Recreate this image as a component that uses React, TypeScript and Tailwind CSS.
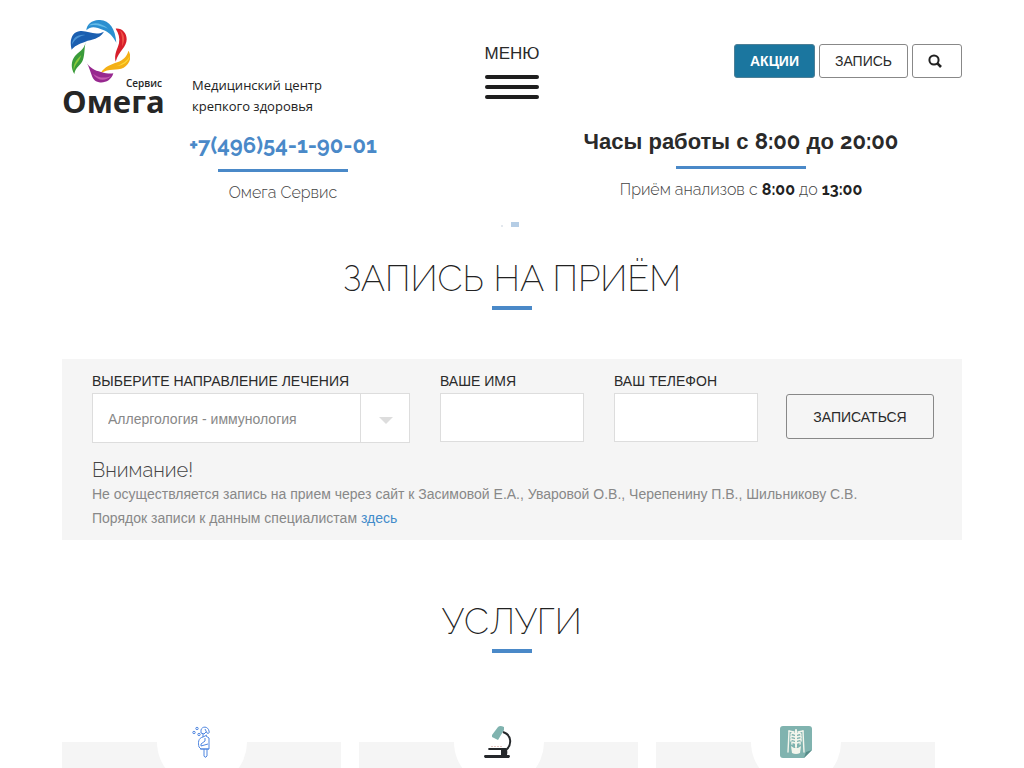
import type { ReactNode } from "react";

const sans = "font-['Liberation_Sans',Arial,sans-serif]";
const display = "font-[Raleway,Lato,sans-serif]";

function Logo() {
  return (
    <a href="#" aria-label="Омега Сервис" className="flex w-[100px] flex-col text-[#262626]">
      <svg viewBox="24 12 180 189" className="ml-2 h-[63px] w-[60px]" aria-hidden="true">
        <path fill="#2a8fd0" d="M73 43C74 24 92 11 114 12C143 14 160 38 163 80C152 59 139 47 124 42C103 34 88 28 73 43Z" />
        <path fill="#63bbe8" d="M80 29C95 16 120 22 138 38C121 30 97 23 80 29Z" />
        <path fill="#1b5fb0" d="M29 101C21 73 30 47 55 45C79 43 98 61 126 47C112 70 89 69 70 77C48 84 37 91 29 101Z" />
        <path fill="#4a93d4" d="M30 86C31 65 48 54 70 57C51 61 39 69 30 86Z" />
        <path fill="#d71f2b" d="M161 38C180 36 194 51 194 70C194 94 171 104 161 137C155 116 167 98 171 82C174 66 170 52 161 38Z" />
        <path fill="#ef5248" d="M174 43C189 55 190 75 180 91C182 72 180 56 174 43Z" />
        <path fill="#f4b016" d="M199 104C211 122 204 144 185 155C165 165 142 155 116 172C128 151 147 146 166 139C183 132 195 122 199 104Z" />
        <path fill="#fbdc3a" d="M203 120C200 139 183 148 162 151C181 144 196 135 203 120Z" />
        <path fill="#97288f" d="M69 133C82 157 99 164 117 168C132 172 143 174 154 172C148 193 129 202 111 199C84 194 91 163 69 133Z" />
        <path fill="#c45ab0" d="M93 173C112 187 129 187 147 180C130 197 106 195 93 173Z" />
        <path fill="#3a9b3a" d="M71 79C66 100 69 113 63 131C57 148 39 154 37 174C26 156 27 135 39 120C51 107 65 103 71 79Z" />
        <path fill="#8aca3d" d="M58 117C53 137 37 144 36 164C31 145 44 131 58 117Z" />
      </svg>
      <span className="-mt-1.5 text-right font-['Open_Sans','Noto_Sans',sans-serif] text-[10px] leading-3 font-semibold">
        Сервис
      </span>
      <span className="font-['Open_Sans','Noto_Sans',sans-serif] text-[31px] leading-6 font-bold">Омега</span>
    </a>
  );
}

function SearchIcon() {
  return (
    <svg viewBox="0 0 14 14" className="size-[14px]" fill="none" stroke="#222" strokeWidth="2" aria-hidden="true">
      <circle cx="6" cy="6" r="4.6" />
      <path d="M9.4 9.4L13 13" strokeWidth="2.6" />
    </svg>
  );
}

function AllergyIcon() {
  return (
    <svg viewBox="0 0 32 32" className="size-8" fill="none" stroke="#4f86e0" strokeWidth="1" aria-hidden="true">
      <circle cx="11" cy="2.5" r="1.2" />
      <circle cx="8" cy="6.5" r="1.2" />
      <circle cx="13" cy="8.5" r="1.2" />
      <path d="M15 4C16 0 22 0 23 5C24 7 22 8 21 7L19 3M15 4L15 7L18 8L20 6M17 8V11L21 9" />
      <path d="M17 11C12 12 12 17 13 21L15 23H23V12L20 10M19 12V15L15 18V20L22 18M14 23H23" />
      <path d="M18 23V30Q19 32 20 31L21 30V23" />
    </svg>
  );
}

function MicroscopeIcon() {
  return (
    <svg viewBox="0 0 32 32" className="size-8" fill="none" aria-hidden="true">
      <path fill="#80b3af" d="M15 1Q17 -1 21 1V4L15 14L9 11V9Z" />
      <path stroke="#25282b" strokeWidth="2" d="M20 6C29 9 29 19 23 24" />
      <path fill="#25282b" d="M6 22H23Q25 24 24 29H26Q28 30 26 32H2Q0 30 2 29H18V24H6Q4 23 6 22Z" />
      <path stroke="#e2c6c2" d="M8 20.5H19" strokeDasharray="2 1" />
    </svg>
  );
}

function XrayIcon() {
  return (
    <svg viewBox="0 0 32 32" className="size-8" fill="none" aria-hidden="true">
      <path fill="#80b3af" d="M3 0H29Q32 0 32 3V24L24 32H3Q0 32 0 29V3Q0 0 3 0Z" />
      <path fill="#568b88" d="M32 24L24 32L26 26Z" />
      <g stroke="#f3f5ec" strokeLinecap="round">
        <path strokeWidth="2" d="M16 4V21" />
        <path strokeWidth="1.4" d="M9 5L14 6M23 5L18 6M15 8Q11 6 11 9M15 11Q10 9 11 12M15 14Q10 12 11 15M15 17Q11 15 12 18M17 8Q21 6 21 9M17 11Q22 9 21 12M17 14Q22 12 21 15M17 17Q21 15 20 18" />
        <path strokeWidth="1.4" d="M9 5L8.5 16L8 26M23 5L23.5 16L24 26" />
      </g>
      <path fill="#f3f5ec" d="M11 20L14 22H18L21 20L20 27Q16 29 12 27Z" />
    </svg>
  );
}

function InfoBlock({ title, accent, children }: { title: ReactNode; accent?: boolean; children: ReactNode }) {
  return (
    <div className={`flex flex-col items-center ${accent ? "pt-[3px]" : ""}`}>
      <p
        className={
          accent
            ? `${display} text-[22px] leading-[30px] font-bold text-[#4a89c8]`
            : `${sans} text-[22px] leading-[30px] font-bold text-[#2a2a2a]`
        }
      >
        {title}
      </p>
      <div className="mt-[9px] h-[3px] w-[130px] bg-[#4a89c8]" />
      <p className={`${display} mt-[9px] text-base leading-6 font-light text-[#444]`}>{children}</p>
    </div>
  );
}

function SectionTitle({ children }: { children: ReactNode }) {
  return (
    <div className="flex flex-col items-center">
      <h2 className={`${display} text-4xl leading-10 font-extralight text-[#222]`}>{children}</h2>
      <div className="mt-2 h-1 w-10 bg-[#4a89c8]" />
    </div>
  );
}

const services = [
  { name: "Аллергология", icon: <AllergyIcon /> },
  { name: "Анализы", icon: <MicroscopeIcon /> },
  { name: "Рентген", icon: <XrayIcon /> },
];

const labelClass = "block pb-0.5 leading-5";
const inputClass = "h-[49px] w-full border border-[#ddd] bg-white px-3 text-sm text-[#777] outline-none";

export default function App() {
  return (
    <div className={`${sans} h-dvh overflow-hidden bg-white text-[#2a2a2a]`}>
      <div className="mx-auto max-w-[900px] pt-5">
        <header className="grid grid-cols-[1fr_54px_1fr] items-start">
          <div className="flex items-start gap-[30px]">
            <Logo />
            <p className="pt-[55px] font-['Open_Sans','Noto_Sans',sans-serif] text-[13px] leading-[21px] whitespace-nowrap text-[#222]">
              Медицинский центр
              <br />
              крепкого здоровья
            </p>
          </div>
          <button type="button" className="mt-6 flex flex-col items-center">
            <span className="text-[17px] leading-5 whitespace-nowrap">МЕНЮ</span>
            <span className="mt-[11px] flex w-full flex-col gap-1.5">
              <span className="h-1 rounded-full bg-[#1e1e1e]" />
              <span className="h-1 rounded-full bg-[#1e1e1e]" />
              <span className="h-1 rounded-full bg-[#1e1e1e]" />
            </span>
          </button>
          <div className="mt-6 flex justify-end gap-1 text-sm">
            <a
              href="#"
              className="flex h-[34px] w-[81px] items-center justify-center rounded-[3px] border border-[#4d7f96] bg-[#1b769f] font-bold text-white"
            >
              АКЦИИ
            </a>
            <a href="#booking" className="flex h-[34px] w-[89px] items-center justify-center rounded-[3px] border border-[#888]">
              ЗАПИСЬ
            </a>
            <button
              type="button"
              aria-label="Поиск"
              className="flex h-[34px] w-[50px] items-center justify-center rounded-[3px] border border-[#888] pr-1"
            >
              <SearchIcon />
            </button>
          </div>
        </header>

        <div className="mt-2.5 grid grid-cols-2 gap-4">
          <InfoBlock title="+7(496)54-1-90-01" accent>
            Омега Сервис
          </InfoBlock>
          <InfoBlock
            title={
              <>
                Часы работы с <span className={`${display} leading-none`}>8:00</span> до{" "}
                <span className={`${display} leading-none`}>20:00</span>
              </>
            }
          >
            Приём анализов с <b className="font-bold text-[#222]">8:00</b> до <b className="font-bold text-[#222]">13:00</b>
          </InfoBlock>
        </div>

        <div className="mt-[17px] flex items-end justify-center gap-2 pr-1">
          <span className="size-0.5 bg-[#e3e8ee]" />
          <span className="h-[5px] w-2 bg-[#b5cde5]" />
        </div>

        <section id="booking" className="mt-[31px]">
          <SectionTitle>ЗАПИСЬ НА ПРИЁМ</SectionTitle>
          <form className="mt-[49px] bg-[#f5f5f5] px-[30px] pt-3 pb-2.5" onSubmit={(e) => e.preventDefault()}>
            <div className="flex items-start text-sm">
              <div className="min-w-0 flex-1">
                <label htmlFor="direction" className={labelClass}>
                  ВЫБЕРИТЕ НАПРАВЛЕНИЕ ЛЕЧЕНИЯ
                </label>
                <div className="relative">
                  <select
                    id="direction"
                    className="block h-[50px] w-full appearance-none border border-[#ddd] bg-white pt-0.5 pr-14 pl-[15px] text-[#888] outline-none"
                  >
                    <option>Аллергология - иммунология</option>
                  </select>
                  <div className="pointer-events-none absolute inset-y-0 right-0 flex w-[50px] items-center justify-center border-l border-[#ddd]">
                    <span className="mt-1 border-x-[7px] border-t-[7px] border-x-transparent border-t-[#ddd]" />
                  </div>
                </div>
              </div>
              <div className="ml-[30px] w-36">
                <label htmlFor="name" className={labelClass}>
                  ВАШЕ ИМЯ
                </label>
                <input id="name" type="text" className={inputClass} />
              </div>
              <div className="ml-[30px] w-36">
                <label htmlFor="phone" className={labelClass}>
                  ВАШ ТЕЛЕФОН
                </label>
                <input id="phone" type="tel" className={inputClass} />
              </div>
              <button type="submit" className="mt-[23px] -mr-0.5 ml-7 h-[45px] w-[148px] rounded-[3px] border border-[#888]">
                ЗАПИСАТЬСЯ
              </button>
            </div>
            <h3 className={`${display} mt-[15px] text-xl leading-6 font-light text-[#444]`}>Внимание!</h3>
            <p className="text-sm leading-6 text-[#888]">
              Не осуществляется запись на прием через сайт к Засимовой Е.А., Уваровой О.В., Черепенину П.В., Шильникову С.В.
              <br />
              Порядок записи к данным специалистам{" "}
              <a href="#" className="text-[#428bca]">
                здесь
              </a>
            </p>
          </form>
        </section>

        <section className="mt-[61px]">
          <SectionTitle>УСЛУГИ</SectionTitle>
          <div className="mt-[89px] grid grid-cols-3 gap-[18px] pr-[27px]">
            {services.map((service) => (
              <a key={service.name} href="#" aria-label={service.name} className="flex h-60 justify-center bg-[#f5f5f5]">
                <span className="-mt-[45px] flex size-[90px] items-center justify-center rounded-full bg-white">
                  {service.icon}
                </span>
              </a>
            ))}
          </div>
        </section>
      </div>
    </div>
  );
}
